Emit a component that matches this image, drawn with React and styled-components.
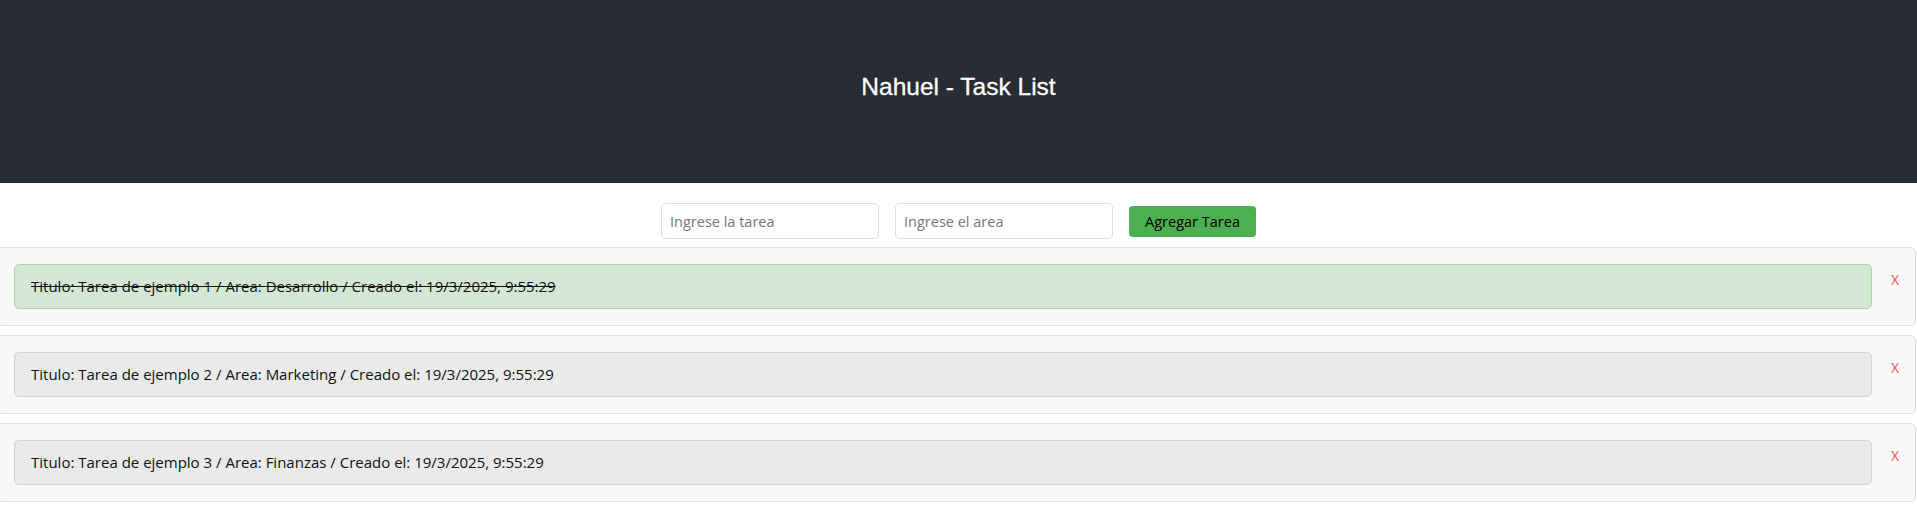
import React, { useState } from "react";
import styled, { createGlobalStyle } from "styled-components";

const GlobalStyle = createGlobalStyle`
  body {
    margin: 0;
    font-family: "Open Sans", "Noto Sans", sans-serif;
    background: #ffffff;
    overflow: hidden;
  }
`;

const initialTasks = [
  { id: 1, title: "Tarea de ejemplo 1", area: "Desarrollo", created: "19/3/2025, 9:55:29", done: true },
  { id: 2, title: "Tarea de ejemplo 2", area: "Marketing", created: "19/3/2025, 9:55:29", done: false },
  { id: 3, title: "Tarea de ejemplo 3", area: "Finanzas", created: "19/3/2025, 9:55:29", done: false },
];

export default function App() {
  const [tasks, setTasks] = useState(initialTasks);
  const [title, setTitle] = useState("");
  const [area, setArea] = useState("");

  const addTask = () => {
    if (!title.trim()) return;
    setTasks([
      ...tasks,
      {
        id: Date.now(),
        title,
        area,
        created: new Date().toLocaleString("es-AR"),
        done: false,
      },
    ]);
    setTitle("");
    setArea("");
  };

  const toggleTask = (id) =>
    setTasks(tasks.map((t) => (t.id === id ? { ...t, done: !t.done } : t)));

  const removeTask = (id) => setTasks(tasks.filter((t) => t.id !== id));

  return (
    <>
      <GlobalStyle />
      <Header>
        <Title>Nahuel - Task List</Title>
      </Header>
      <Form>
        <Input
          placeholder="Ingrese la tarea"
          value={title}
          onChange={(e) => setTitle(e.target.value)}
        />
        <Input
          placeholder="Ingrese el area"
          value={area}
          onChange={(e) => setArea(e.target.value)}
        />
        <AddButton onClick={addTask}>Agregar Tarea</AddButton>
      </Form>
      <List>
        {tasks.map((task) => (
          <Card key={task.id}>
            <TaskBox $done={task.done} onClick={() => toggleTask(task.id)}>
              Titulo: {task.title} / Area: {task.area} / Creado el: {task.created}
            </TaskBox>
            <RemoveButton onClick={() => removeTask(task.id)}>X</RemoveButton>
          </Card>
        ))}
      </List>
    </>
  );
}

const Header = styled.header`
  height: 183px;
  background: #282c34;
  display: flex;
  align-items: center;
  justify-content: center;
`;

const Title = styled.h1`
  margin: 0 0 9px;
  font-family: "Liberation Sans", Arial, sans-serif;
  font-weight: 400;
  font-size: 24.5px;
  color: #ffffff;
  -webkit-text-stroke: 0.3px #ffffff;
`;

const Form = styled.div`
  display: flex;
  align-items: center;
  justify-content: center;
  gap: 16px;
  padding: 20px 0 8px;
`;

const Input = styled.input`
  box-sizing: border-box;
  width: 218px;
  height: 36px;
  padding: 0 8px;
  border: 1px solid #dddddd;
  border-radius: 5px;
  font-family: inherit;
  font-size: 14.5px;
  color: #222;
  outline: none;
  &::placeholder {
    color: #777777;
  }
`;

const AddButton = styled.button`
  box-sizing: border-box;
  width: 127px;
  height: 31px;
  border: none;
  border-radius: 4px;
  background: #4caf50;
  color: #000;
  font-family: inherit;
  font-size: 14.5px;
  cursor: pointer;
`;

const List = styled.ul`
  list-style: none;
  margin: 0 1px 0 -3px;
  padding: 0;
`;

const Card = styled.li`
  display: flex;
  align-items: center;
  gap: 19px;
  margin-bottom: 9px;
  padding: 16px;
  border: 1px solid #dddddd;
  border-radius: 5px;
  background: #f9f9f9;
`;

const TaskBox = styled.div`
  flex: 1;
  padding: 12px 16px;
  line-height: 19px;
  font-size: 15px;
  color: #111;
  border-radius: 5px;
  border: 1px solid ${(p) => (p.$done ? "#a8d4a8" : "#d2d2d2")};
  background: ${(p) => (p.$done ? "#d4e7d4" : "#eaeaea")};
  text-decoration: ${(p) => (p.$done ? "line-through" : "none")};
  cursor: pointer;
`;

const RemoveButton = styled.button`
  margin-bottom: 14px;
  padding: 0;
  border: none;
  background: none;
  color: #ff4d4d;
  font-family: inherit;
  font-size: 14px;
  cursor: pointer;
`;
